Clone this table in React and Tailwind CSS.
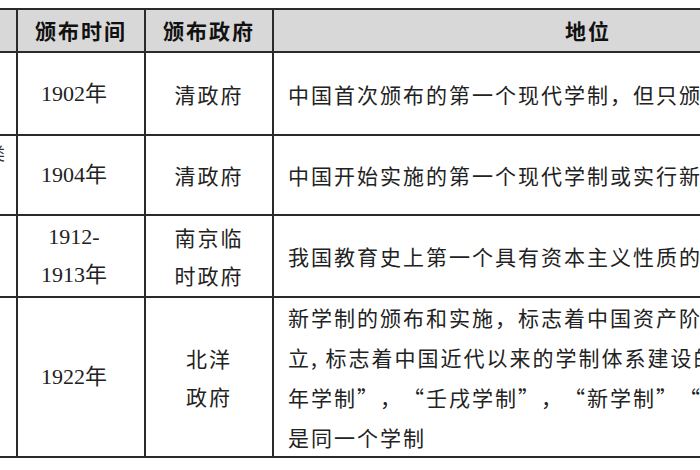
// 学制对比表（截图复刻）：左侧与右侧被裁切，表格比视口宽

const cjk = "font-['Noto_Sans_CJK_SC',sans-serif]"
const serif = "font-['Liberation_Serif','Noto_Sans_CJK_SC',serif]"

// Comillas de ancho completo (la fuente las dibuja proporcionales)
function Abre() {
  return <span className="inline-block w-[23px] text-right">“</span>
}
function Cierra() {
  return <span className="inline-block w-[23px] text-left">”</span>
}

const rows = [
  {
    left: '',
    year: ['1902年'],
    gov: ['清政府'],
    text: ['中国首次颁布的第一个现代学制，但只颁布未实施'],
    h: 'h-[83px]',
  },
  {
    left: '类',
    year: ['1904年'],
    gov: ['清政府'],
    text: ['中国开始实施的第一个现代学制或实行新学制的开端'],
    h: 'h-[80px]',
  },
  {
    left: '',
    year: ['1912-', '1913年'],
    gov: ['南京临', '时政府'],
    text: ['我国教育史上第一个具有资本主义性质的学制'],
    h: 'h-[82px]',
  },
  {
    left: '',
    year: ['1922年'],
    gov: ['北洋', '政府'],
    text: [
      '新学制的颁布和实施，标志着中国资产阶级学制的确',
      '立, 标志着中国近代以来的学制体系建设的基本完成，',
      <>
        年学制<Cierra />，<Abre />壬戌学制<Cierra />，<Abre />新学制<Cierra /><Abre />六三三学制<Cierra />
      </>,
      '是同一个学制',
    ],
    h: 'h-[160px]',
  },
]

function Celda({ children, className = '' }) {
  return (
    <div className={`border-r-2 border-b-2 border-[#2a2a2a] flex flex-col justify-center ${className}`}>
      {children}
    </div>
  )
}

export default function App() {
  return (
    <div className="w-[700px] h-[470px] bg-white overflow-hidden pt-[8px]">
      <div className="ml-[-44px] w-[960px] border-t-2 border-l-2 border-[#2a2a2a] grid grid-cols-[60px_128px_128px_630px]">
        {/* Cabecera */}
        <Celda className="h-[43px] bg-[#d8d8d8]" />
        <Celda className={`h-[43px] bg-[#d8d8d8] items-center ${cjk} font-bold text-[21px] tracking-[2px] text-[#111]`}>
          颁布时间
        </Celda>
        <Celda className={`h-[43px] bg-[#d8d8d8] items-center ${cjk} font-bold text-[21px] tracking-[2px] text-[#111]`}>
          颁布政府
        </Celda>
        <Celda className={`h-[43px] bg-[#d8d8d8] items-center ${cjk} font-bold text-[21px] tracking-[2px] text-[#111]`}>
          地位
        </Celda>

        {/* Filas */}
        {rows.map((r, i) => (
          <div key={i} className="contents">
            <Celda className={`${r.h} justify-start items-end pr-[11px] pt-[4px] ${cjk} text-[17px] text-[#333]`}>
              {r.left}
            </Celda>
            <Celda className={`${r.h} items-center ${serif} text-[22px] leading-[38px] text-[#222] pr-[14px]`}>
              {r.year.map((t) => (
                <span key={t}>{t}</span>
              ))}
            </Celda>
            <Celda className={`${r.h} items-center ${cjk} text-[21px] tracking-[2px] leading-[38px] text-[#222]`}>
              {r.gov.map((t) => (
                <span key={t}>{t}</span>
              ))}
            </Celda>
            <Celda className={`${r.h} pl-[14px] ${cjk} text-[21px] tracking-[2px] leading-[40px] text-[#222]`}>
              {r.text.map((t, j) => (
                <span key={j} className="whitespace-nowrap">{t}</span>
              ))}
            </Celda>
          </div>
        ))}
      </div>
    </div>
  )
}
